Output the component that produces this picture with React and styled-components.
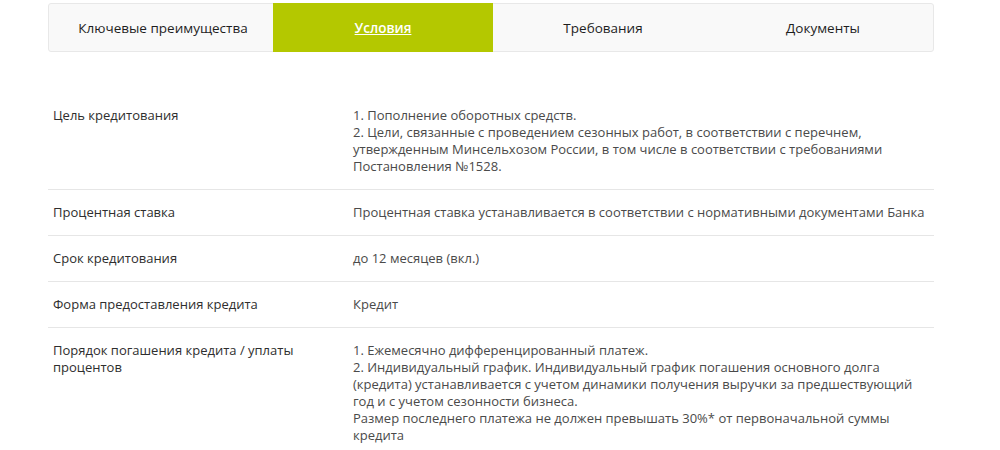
import React from 'react'
import styled, { createGlobalStyle } from 'styled-components'

const Global = createGlobalStyle`
  body {
    margin: 0;
    background: #fff;
    font-family: "Open Sans", "Liberation Sans", sans-serif;
  }
`

const Page = styled.div`
  width: 1000px;
  height: 450px;
  overflow: hidden;
  padding: 3px 66px 0 48px;
  box-sizing: border-box;
`

const Tabs = styled.div`
  display: grid;
  grid-template-columns: repeat(4, 220px);
  height: 49px;
  padding-left: 4px;
  background: #f9f9f9;
  border: 1px solid #e8e8e8;
  border-radius: 3px;
  box-sizing: border-box;
`

const Tab = styled.div`
  display: flex;
  align-items: center;
  justify-content: center;
  margin: -1px 0;
  font-size: 13.5px;
  color: ${p => (p.active ? '#fff' : '#1e1e1e')};
  font-weight: ${p => (p.active ? 600 : 400)};
  text-decoration: ${p => (p.active ? 'underline' : 'none')};
  background: ${p => (p.active ? '#b4c800' : 'transparent')};
`

const Table = styled.div`
  margin-top: 41px;
`

const Row = styled.div`
  display: grid;
  grid-template-columns: 300px 1fr;
  padding: 14px 0 14px 5px;
  border-bottom: ${p => (p.last ? 'none' : '1px solid #e6e6e6')};
  font-size: 13px;
  line-height: 17px;
`

const Label = styled.div`
  color: #2e2e2e;
  padding-right: 50px;
`

const Value = styled.div`
  color: #4a4a4a;
`

const tabs = ['Ключевые преимущества', 'Условия', 'Требования', 'Документы']

const rows = [
  ['Цель кредитования', [
    '1. Пополнение оборотных средств.',
    '2. Цели, связанные с проведением сезонных работ, в соответствии с перечнем, утвержденным Минсельхозом России, в том числе в соответствии с требованиями Постановления №1528.',
  ]],
  ['Процентная ставка', ['Процентная ставка устанавливается в соответствии с нормативными документами Банка']],
  ['Срок кредитования', ['до 12 месяцев (вкл.)']],
  ['Форма предоставления кредита', ['Кредит']],
  ['Порядок погашения кредита / уплаты процентов', [
    '1. Ежемесячно дифференцированный платеж.',
    '2. Индивидуальный график. Индивидуальный график погашения основного долга (кредита) устанавливается с учетом динамики получения выручки за предшествующий год и с учетом сезонности бизнеса.',
    'Размер последнего платежа не должен превышать 30%* от первоначальной суммы кредита',
  ]],
]

export default function App() {
  return (
    <Page>
      <Global />
      <Tabs>
        {tabs.map((t, i) => (
          <Tab key={t} active={i === 1}>{t}</Tab>
        ))}
      </Tabs>
      <Table>
        {rows.map(([label, lines], i) => (
          <Row key={label} last={i === rows.length - 1}>
            <Label>{label}</Label>
            <Value>
              {lines.map(l => <div key={l}>{l}</div>)}
            </Value>
          </Row>
        ))}
      </Table>
    </Page>
  )
}
